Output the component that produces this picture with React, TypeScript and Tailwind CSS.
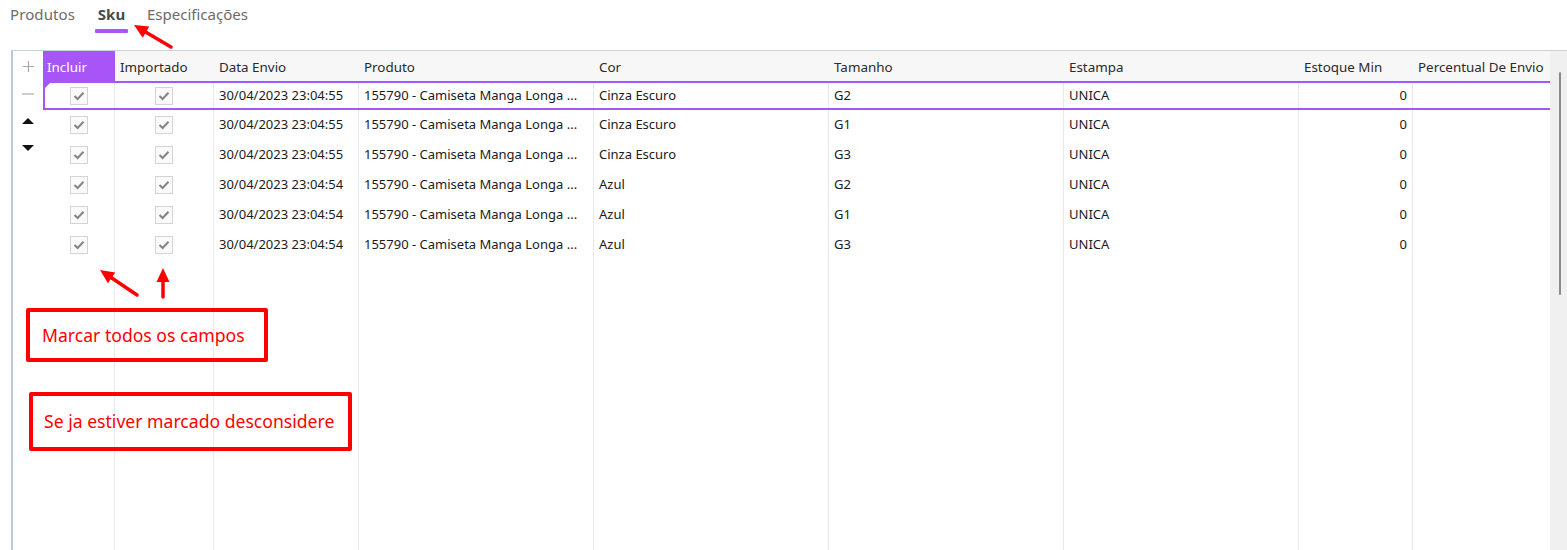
import React from "react";

const cols = [
  { key: "inc", label: "Incluir", w: 72 },
  { key: "imp", label: "Importado", w: 99 },
  { key: "data", label: "Data Envio", w: 145 },
  { key: "prod", label: "Produto", w: 235 },
  { key: "cor", label: "Cor", w: 235 },
  { key: "tam", label: "Tamanho", w: 235 },
  { key: "est", label: "Estampa", w: 235 },
  { key: "min", label: "Estoque Min", w: 114 },
  { key: "perc", label: "Percentual De Envio", w: 137 },
];

const rows = [
  { data: "30/04/2023 23:04:55", cor: "Cinza Escuro", tam: "G2" },
  { data: "30/04/2023 23:04:55", cor: "Cinza Escuro", tam: "G1" },
  { data: "30/04/2023 23:04:55", cor: "Cinza Escuro", tam: "G3" },
  { data: "30/04/2023 23:04:54", cor: "Azul", tam: "G2" },
  { data: "30/04/2023 23:04:54", cor: "Azul", tam: "G1" },
  { data: "30/04/2023 23:04:54", cor: "Azul", tam: "G3" },
];

function Check() {
  return (
    <div className="w-[18px] h-[18px] border border-[#d4d4d4] bg-[#fafafa] flex items-center justify-center">
      <svg width="12" height="10" viewBox="0 0 12 10">
        <path d="M1.5 5 L4.6 8 L10.5 1.8" fill="none" stroke="#858585" strokeWidth="2" />
      </svg>
    </div>
  );
}

function Arrow({ x1, y1, x2, y2 }: { x1: number; y1: number; x2: number; y2: number }) {
  const dx = x2 - x1;
  const dy = y2 - y1;
  const len = Math.sqrt(dx * dx + dy * dy);
  const ux = dx / len;
  const uy = dy / len;
  const hl = 14;
  const hw = 6.5;
  const bx = x2 - ux * hl;
  const by = y2 - uy * hl;
  const px = -uy;
  const py = ux;
  const pts = `${x2},${y2} ${bx + px * hw},${by + py * hw} ${bx - px * hw},${by - py * hw}`;
  return (
    <g>
      <line x1={x1} y1={y1} x2={bx + ux * 2} y2={by + uy * 2} stroke="#ff0000" strokeWidth="3.5" strokeLinecap="round" />
      <polygon points={pts} fill="#ff0000" />
    </g>
  );
}

export default function App() {
  const font = { fontFamily: '"Noto Sans", "Open Sans", sans-serif' };
  return (
    <div className="relative w-[1567px] h-[550px] overflow-hidden bg-white flex flex-col" style={font}>
      {/* Tabs */}
      <div className="h-[50px] flex items-start pl-[10px] pt-[4px] text-[15px] leading-[20px]">
        <div className="text-[#6b6b6b] tracking-[0.1px]">Produtos</div>
        <div className="ml-[20px] flex flex-col items-center">
          <div className="font-bold text-[#4a4a4a]">Sku</div>
          <div className="mt-[5px] h-[4px] w-[33px] bg-[#a855f7] rounded-[1px]" />
        </div>
        <div className="ml-[19px] text-[#6b6b6b]">Especificações</div>
      </div>

      {/* Grid */}
      <div className="flex-1 ml-[11px] border-l-2 border-t border-l-[#b9c8da] border-t-[#c9d3de] flex min-h-0">
        {/* indicator column */}
        <div className="w-[30px] flex flex-col items-center pt-[2px]">
          <div className="h-[27px] flex items-center justify-center">
            <svg width="11" height="11" viewBox="0 0 11 11">
              <path d="M5.5 0 V11 M0 5.5 H11" stroke="#a9a9a9" strokeWidth="1.2" />
            </svg>
          </div>
          <div className="h-[27px] flex items-center justify-center">
            <svg width="12" height="2" viewBox="0 0 12 2">
              <path d="M0 1 H12" stroke="#a9a9a9" strokeWidth="1.2" />
            </svg>
          </div>
          <div className="h-[27px] flex items-center justify-center">
            <svg width="12" height="6" viewBox="0 0 12 6">
              <path d="M6 0 L12 6 L0 6 Z" fill="#111" />
            </svg>
          </div>
          <div className="h-[27px] flex items-center justify-center">
            <svg width="12" height="6" viewBox="0 0 12 6">
              <path d="M0 0 L12 0 L6 6 Z" fill="#111" />
            </svg>
          </div>
        </div>

        {/* table */}
        <div className="flex flex-col w-[1507px]">
          {/* header */}
          <div className="h-[30px] flex bg-[#f7f7f7] text-[13.4px] text-[#2a2a2a]">
            {cols.map((c) => (
              <div
                key={c.key}
                className={
                  c.key === "inc"
                    ? "bg-[#a855f7] text-white px-[4px] pt-[2px] flex items-center shrink-0"
                    : "px-[5px] pt-[2px] flex items-center shrink-0 whitespace-nowrap"
                }
                style={{ width: c.w }}
              >
                {c.label}
              </div>
            ))}
          </div>

          {/* rows */}
          {rows.map((r, i) => (
            <div key={i} className={`relative flex text-[13px] text-[#1b1b1b] ${i === 0 ? "h-[29px]" : "h-[30px]"}`}>
              {cols.map((c) => {
                let content: React.ReactNode = null;
                let cls = "px-[5px] flex items-center shrink-0 border-r border-[#e8e9ec] whitespace-nowrap overflow-hidden";
                if (c.key === "inc" || c.key === "imp") {
                  content = <Check />;
                  cls = "flex items-center justify-center shrink-0 border-r border-[#e8e9ec]";
                } else if (c.key === "data") content = r.data;
                else if (c.key === "prod") content = "155790 - Camiseta Manga Longa ...";
                else if (c.key === "cor") content = r.cor;
                else if (c.key === "tam") content = r.tam;
                else if (c.key === "est") content = "UNICA";
                else if (c.key === "min") {
                  content = "0";
                  cls = "px-[5px] flex items-center justify-end shrink-0 border-r border-[#e8e9ec]";
                } else if (c.key === "perc") cls = "shrink-0";
                return (
                  <div key={c.key} className={cls} style={{ width: c.w }}>
                    {content}
                  </div>
                );
              })}
              {i === 0 && (
                <div className="absolute inset-0 border-y-2 border-l-2 border-[#a855f7] pointer-events-none">
                  <div className="absolute left-0 top-0 w-0 h-0 border-t-[5px] border-r-[5px] border-t-[#a855f7] border-r-transparent" />
                </div>
              )}
            </div>
          ))}

          {/* filler */}
          <div className="flex-1 flex">
            {cols.map((c) => (
              <div
                key={c.key}
                className={c.key === "perc" ? "shrink-0" : "shrink-0 border-r border-[#e8e9ec]"}
                style={{ width: c.w }}
              />
            ))}
          </div>
        </div>

        {/* scrollbar */}
        <div className="w-[17px] bg-[#f0f0f0] flex justify-center pt-[21px] pl-[2px]">
          <div className="w-[2px] h-[223px] bg-[#8a8a8a] rounded-full" />
        </div>
      </div>

      {/* annotations */}
      <div className="absolute left-[26px] top-[308px] w-[242px] h-[54px] border-[4px] border-[#ff0000] rounded-[2px] flex items-center pl-[12px] text-[17.6px] text-[#ff0000]">
        Marcar todos os campos
      </div>
      <div className="absolute left-[29px] top-[392px] w-[323px] h-[59px] border-[4px] border-[#ff0000] rounded-[2px] flex items-center pl-[11px] text-[17.6px] text-[#ff0000]">
        Se ja estiver marcado desconsidere
      </div>
      <svg className="absolute left-0 top-0 pointer-events-none" width="1567" height="550">
        <Arrow x1={171} y1={47} x2={134} y2={25} />
        <Arrow x1={137} y1={295} x2={100} y2={270} />
        <Arrow x1={163} y1={297} x2={163} y2={268} />
      </svg>
    </div>
  );
}
